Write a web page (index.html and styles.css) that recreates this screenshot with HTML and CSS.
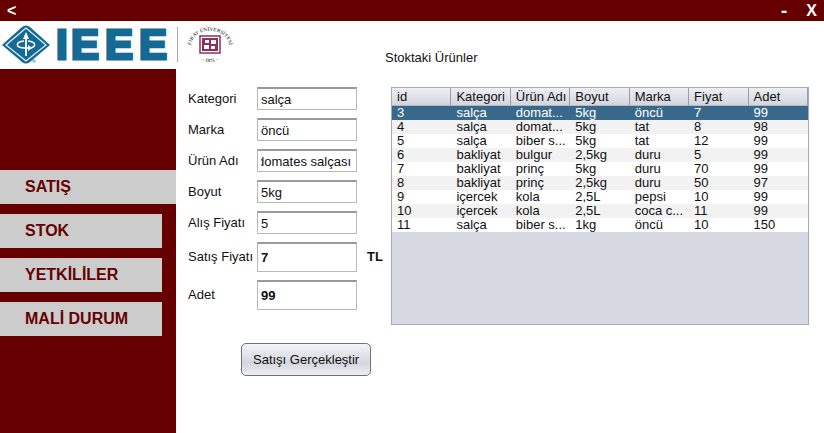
FILE: index.html
```html
<!DOCTYPE html>
<html lang="tr">
<head>
<meta charset="utf-8">
<title>Satış</title>
<link rel="stylesheet" href="styles.css">
</head>
<body>
<header class="titlebar">
  <button class="win-btn back" type="button" aria-label="Geri">&lt;</button>
  <button class="win-btn minimize" type="button" aria-label="Küçült">-</button>
  <button class="win-btn" type="button" aria-label="Kapat">X</button>
</header>
<div class="brand">
  <svg class="logos" viewBox="0 0 240 48" role="img" aria-label="IEEE Fırat Üniversitesi">
    <path d="M2 24 22 6Q26 3 30 6L50 24 30 41Q26 44 22 41Z" fill="#146a94"/>
    <path d="M6 24 26 7 46 24 26 40Z" fill="none" stroke="#e4f1f6" stroke-width="1.2"/>
    <path d="M26 35V17" stroke="#fff" stroke-width="1.8"/>
    <path d="M26 11 29 18H23Z" fill="#fff"/>
    <path d="M24 20C15 21 15 27 25 27H29M28 20C37 21 36 26 30 27" fill="none" stroke="#fff" stroke-width="1.5"/>
    <path d="M28 24 32 27 28 30Z" fill="#fff"/>
    <circle cx="34" cy="40" r="1.2" fill="none" stroke="#6fa3bb"/>
    <text class="ieee" x="56 71 105 139" y="38">IEEE</text>
    <path d="M177.500 6V41" stroke="#a3acb8"/>
    <path id="ring-top" d="M195 34A19 15 0 1 1 225 34" fill="none"/>
    <path id="ring-bottom" d="M196 36A20 18 0 0 0 224 36" fill="none"/>
    <text class="seal"><textPath href="#ring-top" startOffset="50%">FIRAT ÜNİVERSİTESİ</textPath></text>
    <text class="seal"><textPath href="#ring-bottom" startOffset="50%">– 1975 –</textPath></text>
    <rect x="200" y="15" width="20" height="17" fill="#fff" stroke="#8c3158" stroke-width="1.500"/>
    <rect x="202" y="17" width="16" height="13" fill="#8c3158"/>
    <path d="M205 19H209V22H205ZM211 19H216V23H211ZM204 24H209V28H204ZM211 25H215V28H211Z" fill="#fff"/>
  </svg>
  <h1 class="title">Stoktaki Ürünler</h1>
</div>
<div class="body">
  <nav class="sidebar">
    <a class="item active" href="#satis">SATIŞ</a>
    <a class="item" href="#stok">STOK</a>
    <a class="item" href="#yetkililer">YETKİLİLER</a>
    <a class="item" href="#mali">MALİ DURUM</a>
  </nav>
  <main class="main">
    <form class="form">
      <div class="row"><label for="kategori">Kategori</label><input id="kategori" type="text" value="salça"></div>
      <div class="row"><label for="marka">Marka</label><input id="marka" type="text" value="öncü"></div>
      <div class="row"><label for="urun">Ürün Adı</label><input id="urun" class="show-end" type="text" value="domates salçası"></div>
      <div class="row"><label for="boyut">Boyut</label><input id="boyut" type="text" value="5kg"></div>
      <div class="row"><label for="alis">Alış Fiyatı</label><input id="alis" type="text" value="5"></div>
      <div class="row large"><label for="satis">Satış Fiyatı</label><input id="satis" type="text" value="7"><span class="unit">TL</span></div>
      <div class="row large"><label for="adet">Adet</label><input id="adet" type="text" value="99"></div>
      <button class="submit" type="button">Satışı Gerçekleştir</button>
    </form>
    <div class="stock">
      <table>
        <thead><tr><th>id</th><th>Kategori</th><th>Ürün Adı</th><th>Boyut</th><th>Marka</th><th>Fiyat</th><th>Adet</th></tr></thead>
        <tbody>
          <tr class="selected"><td>3</td><td>salça</td><td>domat...</td><td>5kg</td><td>öncü</td><td>7</td><td>99</td></tr>
          <tr><td>4</td><td>salça</td><td>domat...</td><td>5kg</td><td>tat</td><td>8</td><td>98</td></tr>
          <tr><td>5</td><td>salça</td><td>biber s...</td><td>5kg</td><td>tat</td><td>12</td><td>99</td></tr>
          <tr><td>6</td><td>bakliyat</td><td>bulgur</td><td>2,5kg</td><td>duru</td><td>5</td><td>99</td></tr>
          <tr><td>7</td><td>bakliyat</td><td>prinç</td><td>5kg</td><td>duru</td><td>70</td><td>99</td></tr>
          <tr><td>8</td><td>bakliyat</td><td>prinç</td><td>2,5kg</td><td>duru</td><td>50</td><td>97</td></tr>
          <tr><td>9</td><td>içercek</td><td>kola</td><td>2,5L</td><td>pepsi</td><td>10</td><td>99</td></tr>
          <tr><td>10</td><td>içercek</td><td>kola</td><td>2,5L</td><td>coca c...</td><td>11</td><td>99</td></tr>
          <tr><td>11</td><td>salça</td><td>biber s...</td><td>1kg</td><td>öncü</td><td>10</td><td>150</td></tr>
        </tbody>
      </table>
    </div>
  </main>
</div>
</body>
</html>
```
FILE: styles.css
```css
* { box-sizing: border-box; }

body {
  margin: 0;
  min-height: 100vh;
  display: flex;
  flex-direction: column;
  background: #fff;
  color: #111;
  font: 13px/16px "Liberation Sans", Arial, sans-serif;
}

input, button { font: inherit; color: inherit; }

.titlebar {
  display: flex;
  align-items: center;
  height: 21px;
  padding: 0 7px;
  background: #600;
}

.win-btn {
  padding: 0;
  border: 0;
  background: none;
  color: #fff;
  font-size: 16px;
  font-weight: bold;
  line-height: 20px;
}

.back { margin-right: auto; }
.minimize { margin-right: 19px; font-family: "DejaVu Sans", sans-serif; }

.brand { display: flex; height: 48px; }

.logos { width: 240px; height: 48px; flex: none; }

.ieee {
  font: bold 42px "Liberation Sans", sans-serif;
  fill: #146a94;
  stroke: #146a94;
  stroke-width: 3px;
}

.seal {
  font: bold 5px "Liberation Serif", serif;
  fill: #555;
  text-anchor: middle;
}

.title {
  margin: 29px 0 0 145px;
  font-size: 13px;
  font-weight: normal;
  line-height: 16px;
}

.body { display: flex; flex: 1; }

.sidebar {
  display: flex;
  flex-direction: column;
  gap: 10px;
  width: 176px;
  flex: none;
  padding-top: 101px;
  background: #600;
}

.item {
  margin-right: 14px;
  padding-left: 25px;
  background: #ccc;
  color: #600;
  font-size: 16px;
  font-weight: bold;
  line-height: 34px;
  text-decoration: none;
}

.active { margin-right: 0; }

.main {
  display: flex;
  flex: 1;
  align-items: flex-start;
  padding: 18px 15px 0 12px;
}

.form {
  display: flex;
  flex-direction: column;
  gap: 8px;
  width: 203px;
  flex: none;
}

.row { display: flex; align-items: center; }
.row label { width: 69px; }

.row input {
  width: 100px;
  height: 23px;
  padding: 0 3px;
  border: 1px solid #b8b8b8;
  border-top: 2px solid #9a9a9a;
  background: #fff;
}

.row .show-end { direction: rtl; padding-right: 5px; }
.large input { height: 30px; font-weight: bold; }
.unit { margin-left: 10px; font-weight: bold; }

.submit {
  align-self: flex-start;
  margin: 25px 0 0 53px;
  padding: 0 11px;
  height: 33px;
  border: 1px solid #6d727c;
  border-radius: 5px;
  background: linear-gradient(#f4f5f8, #dddfe6 45%, #d3d6de 60%, #eceef4);
  white-space: nowrap;
}

.stock {
  flex: 1;
  min-height: 238px;
  border: 1px solid #a5a9b5;
  background: #d6d9e1;
}

table {
  width: 100%;
  table-layout: fixed;
  border-collapse: separate;
  border-spacing: 0;
}

th, td {
  padding: 0 0 0 5px;
  text-align: left;
  font-weight: normal;
  white-space: nowrap;
}

th {
  height: 18px;
  background: linear-gradient(#eeeff3, #d3d6de);
  border-right: 1px solid #9a9eaa;
  border-bottom: 1px solid #b3b6c0;
}

td { height: 14px; line-height: 14px; background: #fff; }
tbody tr:nth-child(even) td { background: #f2f2f2; }
tbody .selected td { background: #39698a; color: #fff; }
```
